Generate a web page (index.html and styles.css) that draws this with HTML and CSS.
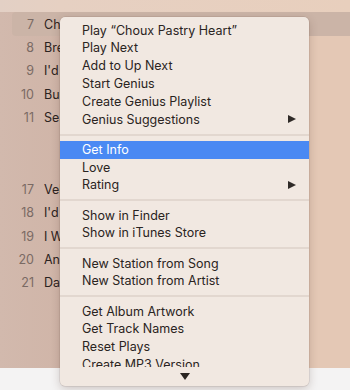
FILE: index.html
```html
<!DOCTYPE html>
<html>
<head>
<meta charset="utf-8">
<link rel="stylesheet" href="styles.css">
</head>
<body>
<div class="window">
  <div class="topstrip"></div>
  <div class="list">
    <div class="row selected"><span class="num">7</span><span class="title">Choux Pastry Heart</span></div>
    <div class="row"><span class="num">8</span><span class="title">Bread and Butter</span></div>
    <div class="row"><span class="num">9</span><span class="title">I'd Rather Go Blind</span></div>
    <div class="row"><span class="num">10</span><span class="title">Burn</span></div>
    <div class="row"><span class="num">11</span><span class="title">Sea of Love</span></div>
    <div class="gap"></div>
    <div class="row"><span class="num">17</span><span class="title">Velvet</span></div>
    <div class="row"><span class="num">18</span><span class="title">I'd Be Waiting</span></div>
    <div class="row"><span class="num">19</span><span class="title">I Want You</span></div>
    <div class="row"><span class="num">20</span><span class="title">Another Day</span></div>
    <div class="row"><span class="num">21</span><span class="title">Daylight</span></div>
  </div>
  <div class="footer"></div>
</div>

<div class="menu">
  <div class="items">
    <div class="item">Play “Choux Pastry Heart”</div>
    <div class="item">Play Next</div>
    <div class="item">Add to Up Next</div>
    <div class="item">Start Genius</div>
    <div class="item">Create Genius Playlist</div>
    <div class="item sub">Genius Suggestions<span class="arrow"></span></div>
    <div class="sep"></div>
    <div class="item active">Get Info</div>
    <div class="item">Love</div>
    <div class="item sub">Rating<span class="arrow"></span></div>
    <div class="sep"></div>
    <div class="item">Show in Finder</div>
    <div class="item">Show in iTunes Store</div>
    <div class="sep"></div>
    <div class="item">New Station from Song</div>
    <div class="item">New Station from Artist</div>
    <div class="sep"></div>
    <div class="item">Get Album Artwork</div>
    <div class="item">Get Track Names</div>
    <div class="item">Reset Plays</div>
    <div class="item">Create MP3 Version</div>
  </div>
  <div class="scroll"><span class="down"></span></div>
</div>
</body>
</html>
```

FILE: styles.css
```css
html, body {
  margin: 0;
  padding: 0;
}
body {
  width: 350px;
  height: 390px;
  overflow: hidden;
  position: relative;
  font-family: "Inter", "Liberation Sans", sans-serif;
  background: #f4f3f3;
}
.window {
  display: flex;
  flex-direction: column;
  height: 390px;
}
.topstrip {
  height: 12.4px;
  background: linear-gradient(to right, #e3d0c5 0, #e6d0c2 60px, #e8cfbd 350px);
}
.list {
  height: 355.6px;
  background: linear-gradient(to right, #d2b9ad 0, #d0b5a8 60px, #e4c8b5 310px, #e4c8b5 350px);
  display: flex;
  flex-direction: column;
}
.row {
  height: 23.33px;
  display: flex;
  align-items: center;
  font-size: 12.5px;
  color: #2b2220;
  flex-shrink: 0;
}
.row.selected {
  margin-left: 12px;
  border-radius: 4px 0 0 4px;
  background: #cbb4a7;
}
.row.selected .num {
  width: 22px;
}
.num {
  width: 34px;
  text-align: right;
  color: #7a6a64;
  margin-right: 10px;
  flex-shrink: 0;
}
.title {
  white-space: nowrap;
}
.gap {
  height: 48.7px;
  flex-shrink: 0;
}
.footer {
  flex: 1;
  background: #f4f3f3;
}

.menu {
  position: absolute;
  left: 60px;
  top: 16.7px;
  width: 249px;
  height: 369px;
  background: #f1e8e1;
  border-radius: 5px;
  box-shadow: 0 0 0 0.5px rgba(90, 60, 50, 0.18), 0 3px 10px rgba(70, 40, 30, 0.22);
  overflow: hidden;
  font-family: "Inter", "Liberation Sans", sans-serif;
  font-size: 12.5px;
  color: #2a2421;
}
.items {
  padding-top: 4.9px;
  height: 350.6px;
  box-sizing: border-box;
  overflow: hidden;
}
.item {
  height: 17.8px;
  line-height: 17.8px;
  padding-left: 22px;
  padding-right: 13px;
  display: flex;
  align-items: center;
  white-space: nowrap;
}
.item.active {
  background: #4a89f3;
  color: #ffffff;
}
.item.sub {
  justify-content: space-between;
}
.arrow {
  width: 0;
  height: 0;
  border-top: 4.5px solid transparent;
  border-bottom: 4.5px solid transparent;
  border-left: 8px solid #2f2a27;
}
.sep {
  height: 12.4px;
  display: flex;
  align-items: center;
}
.sep::before {
  content: "";
  display: block;
  width: 100%;
  height: 2px;
  background: #e2d7cf;
}
.scroll {
  height: 18.4px;
  display: flex;
  justify-content: center;
  align-items: center;
}
.down {
  width: 0;
  height: 0;
  border-left: 5px solid transparent;
  border-right: 5px solid transparent;
  border-top: 7px solid #2b2522;
}
```
